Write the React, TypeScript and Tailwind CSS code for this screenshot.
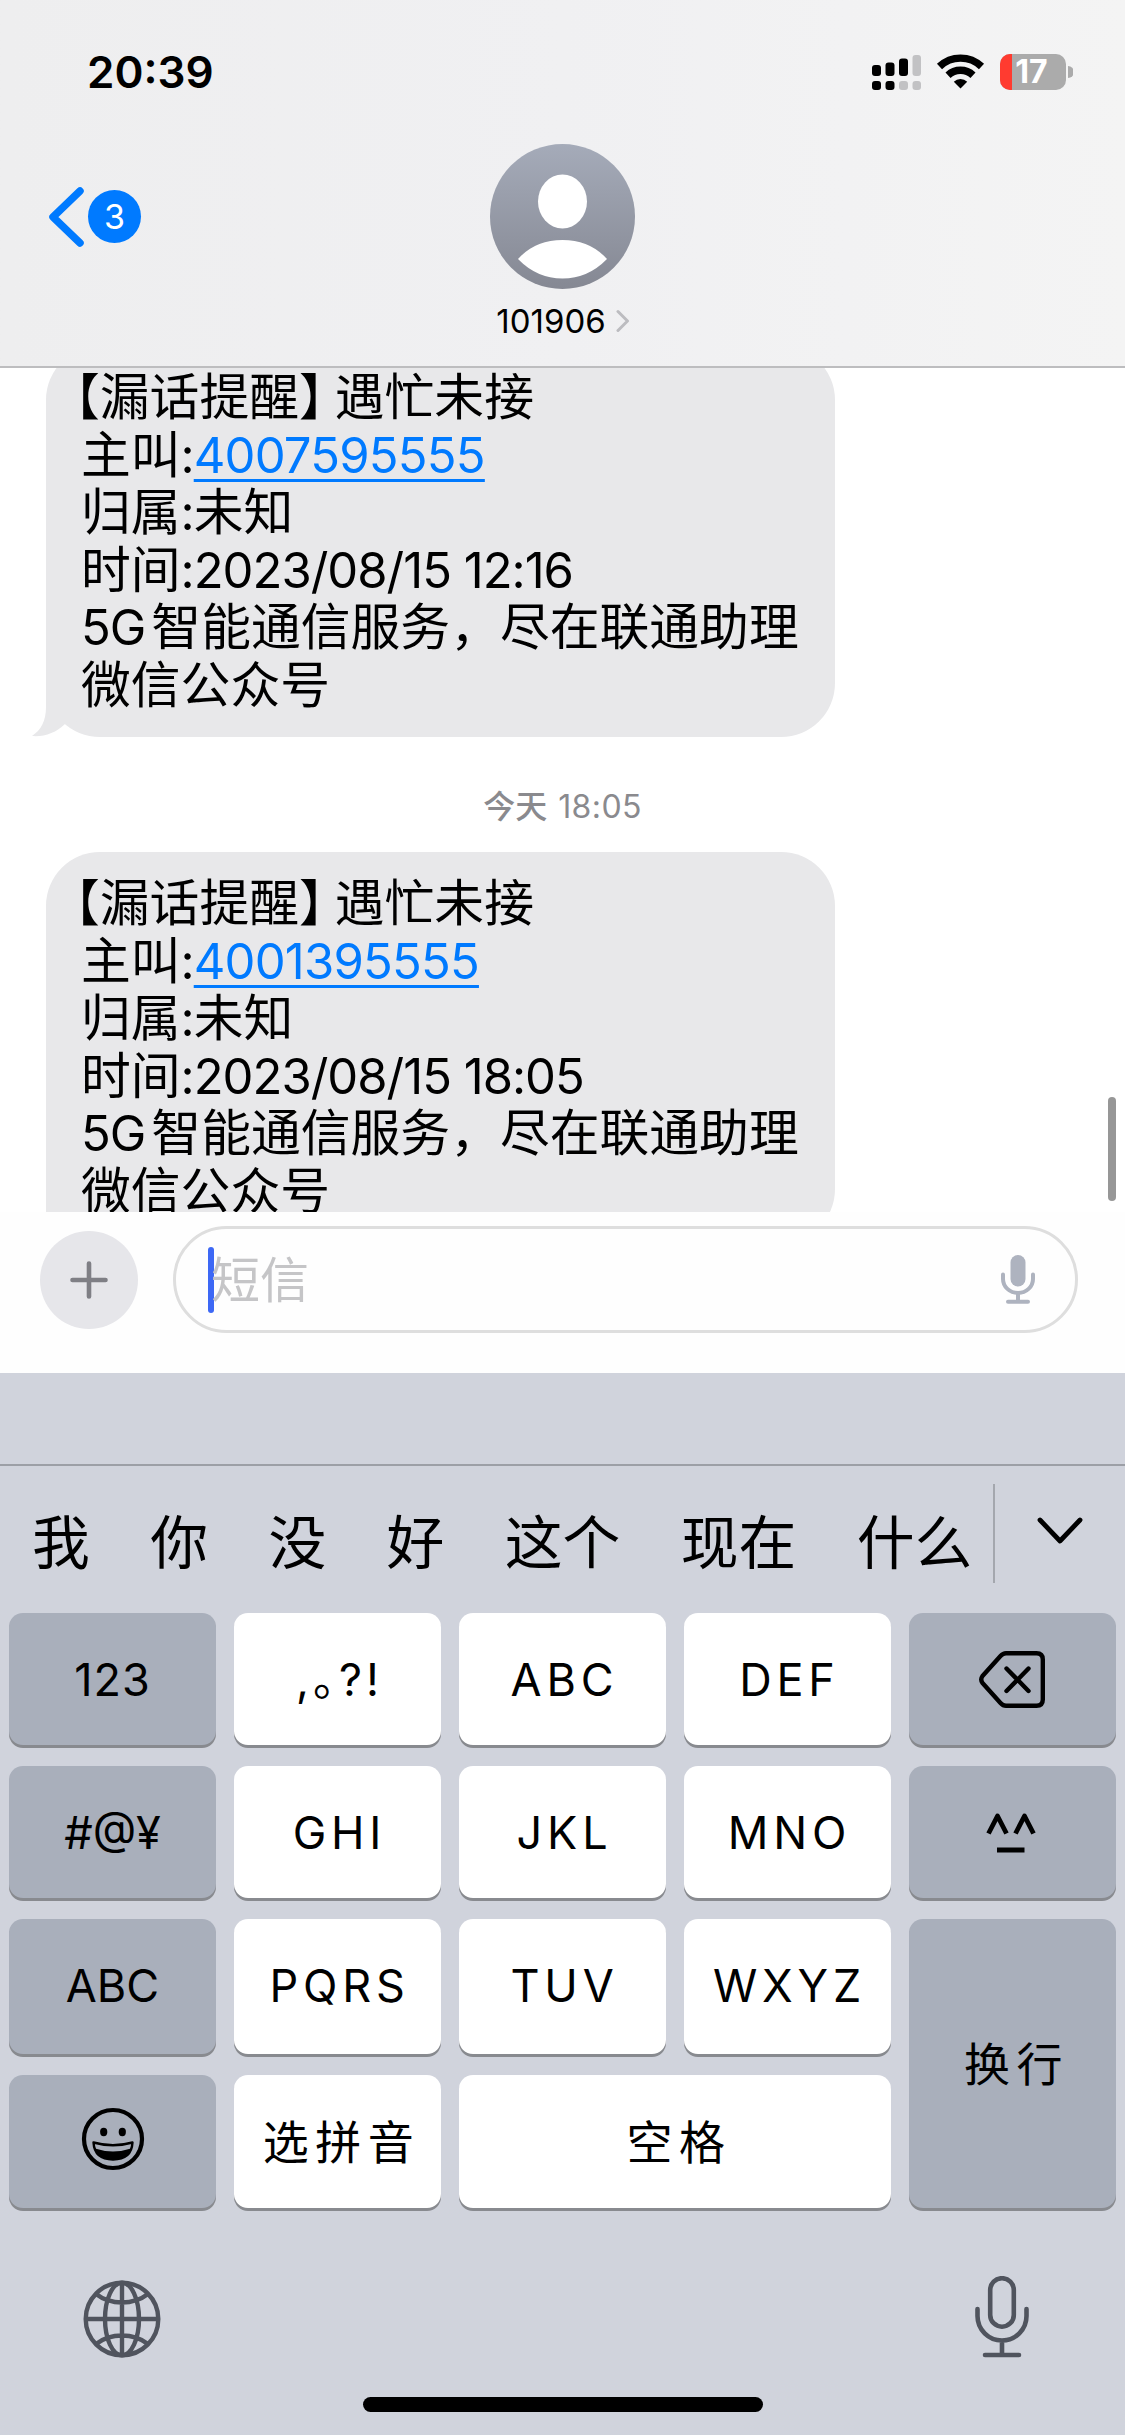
import type { ReactNode } from 'react';

interface Message {
  id: string;
  caller: string;
  time: string;
}

interface KeyProps {
  children: ReactNode;
  dark?: boolean;
  className?: string;
}

const messages: Message[] = [
  { id: '1', caller: '4007595555', time: '2023/08/15 12:16' },
  { id: '2', caller: '4001395555', time: '2023/08/15 18:05' },
];

const candidates = ['我', '你', '没', '好', '这个', '现在', '什么'];

function StatusBar() {
  return (
    <div className="flex h-[144px] items-center justify-between pl-[87px] pr-[52px]">
      <span className="text-[44px] font-semibold leading-[144px]">20:39</span>
      <svg width="201" height="38" viewBox="0 0 201 38">
        <g>
          <rect x="0" y="12" width="9" height="11" rx="3" />
          <rect x="13.5" y="9.5" width="9" height="13.5" rx="3" />
          <rect x="27" y="5.5" width="9" height="17.5" rx="3" />
          <rect x="40.5" y="2" width="8.5" height="21" rx="3" fill="#c2c2c4" />
          <rect x="0" y="28" width="9" height="9" rx="3" />
          <rect x="13.5" y="28" width="9" height="9" rx="3" />
          <rect x="27" y="28" width="9" height="9" rx="3" fill="#c2c2c4" />
          <rect x="40.5" y="28" width="8.5" height="9" rx="3" fill="#c2c2c4" />
        </g>
        <g fill="none" stroke="#000" strokeWidth="7.4">
          <path d="M67.5 13.5 A30.5 30.5 0 0 1 109.5 13.5" />
          <path d="M76 22.2 A18.3 18.3 0 0 1 101 22.2" />
        </g>
        <path d="M88.5 35.5 L81.8 28.8 A9.6 9.6 0 0 1 95.2 28.8 Z" />
        <defs>
          <clipPath id="battery">
            <rect x="128" y="1" width="66" height="36" rx="10" />
          </clipPath>
        </defs>
        <g clipPath="url(#battery)">
          <rect x="128" y="1" width="66" height="36" fill="#ababab" />
          <rect x="128" y="1" width="12" height="36" fill="#ff3b30" />
        </g>
        <path d="M196 13 a6 6 0 0 1 0 12 Z" fill="#ababab" />
        <text x="159.5" y="30" textAnchor="middle" fill="#fff" className="text-[32px] font-bold">
          17
        </text>
      </svg>
    </div>
  );
}

function Header() {
  return (
    <header className="h-[368px] border-b-2 border-[#bdbdbf] bg-linear-to-r from-[#eeeeef] via-[#f0f0f2] to-[#f4f4f4]">
      <StatusBar />
      <div className="grid grid-cols-[1fr_auto_1fr]">
        <div className="flex h-[145px] items-center gap-[3px] pl-[47px]">
          <svg width="38" height="62" viewBox="0 0 38 62" fill="none" stroke="#007aff" strokeWidth="7.5" strokeLinecap="round" strokeLinejoin="round">
            <path d="M33 5 L6 31 L33 57" />
          </svg>
          <span className="flex size-[53px] items-center justify-center rounded-full bg-[#007aff] text-[34px] leading-none text-white">3</span>
        </div>
        <div className="flex flex-col items-center">
          <svg width="145" height="145" viewBox="0 0 145 145">
            <defs>
              <linearGradient id="avatar" x1="0" y1="0" x2="0" y2="1">
                <stop offset="0" stopColor="#a5abb9" />
                <stop offset="1" stopColor="#858893" />
              </linearGradient>
            </defs>
            <circle cx="72.5" cy="72.5" r="72.5" fill="url(#avatar)" />
            <ellipse cx="72.5" cy="57.5" rx="24.5" ry="27" fill="#fff" />
            <path d="M28 115 Q45 96 72.5 96 Q100 96 117 115 Q98 134.5 72.5 134.5 Q47 134.5 28 115 Z" fill="#fff" />
          </svg>
          <div className="mt-[11px] flex items-center gap-[10px] pl-[1px] text-[33px] leading-[42px]">
            <span>101906</span>
            <svg width="14" height="24" viewBox="0 0 14 24" fill="none" stroke="#bcbcc0" strokeWidth="3" strokeLinecap="round" strokeLinejoin="round">
              <path d="M2 2.5 L11.5 12 L2 21.5" />
            </svg>
          </div>
        </div>
      </div>
    </header>
  );
}

function Latin({ children }: { children: ReactNode }) {
  return <span className="text-[49px] leading-none tracking-[-1px]">{children}</span>;
}

function Line({ children }: { children: ReactNode }) {
  return <div className="h-[57.6px]">{children}</div>;
}

function Bubble({ message }: { message: Message }) {
  return (
    <div className="relative ml-[46px] h-[391px] w-[789px] rounded-[54px] bg-[#e8e8ea] pl-[35px] pt-[23px] text-[49.8px] leading-[57.6px] whitespace-nowrap">
      <svg className="absolute -left-[14px] bottom-0" width="60" height="60" viewBox="0 0 60 60" fill="#e8e8ea">
        <path d="M14 0 V30 C14 44 9 53 0 59 C12 60 24 56 33 47 L60 40 V0 Z" />
      </svg>
      <div className="relative">
        <Line>
          <span className="-ml-[31px]">【</span>漏话提醒<span className="tracking-[-14px]">】</span>遇忙未接
        </Line>
        <Line>
          主叫<Latin>:</Latin>
          <span className="text-[49px] leading-none tracking-[-0.8px] text-[#007aff] underline decoration-[3px] underline-offset-[6px] [text-decoration-skip-ink:none]">
            {message.caller}
          </span>
        </Line>
        <Line>
          归属<Latin>:</Latin>未知
        </Line>
        <Line>
          时间<Latin>:{message.time}</Latin>
        </Line>
        <Line>
          <Latin>5G</Latin>
          <span className="ml-[6px]">智能通信服务，尽在联通助理</span>
        </Line>
        <Line>微信公众号</Line>
      </div>
    </div>
  );
}

function Conversation() {
  return (
    <main className="relative h-[844px] overflow-hidden bg-white">
      <div className="-mt-[22px]">
        <Bubble message={messages[0]} />
        <div className="flex h-[115px] items-center justify-center pt-[25px] text-[32px] text-[#8a8a8e]">
          <span className="font-medium">今天</span>
          <span className="ml-[11px] tracking-[0.4px]">18:05</span>
        </div>
        <Bubble message={messages[1]} />
      </div>
      <div className="absolute right-[9px] top-[729px] h-[104px] w-[8px] rounded-full bg-[#979797]" />
    </main>
  );
}

function Composer() {
  return (
    <div className="flex h-[161px] gap-[35px] bg-[#fefefe] pl-[40px] pr-[47px] pt-[14px]">
      <button className="mt-[5px] flex size-[98px] shrink-0 items-center justify-center rounded-full bg-[#e6e6ea]">
        <svg width="38" height="38" viewBox="0 0 38 38" stroke="#7f7f85" strokeWidth="4.6" strokeLinecap="round">
          <path d="M19 2.5 V35.5 M2.5 19 H35.5" />
        </svg>
      </button>
      <div className="flex h-[107px] flex-1 items-center rounded-full border-[3px] border-[#dedede] pl-[32px] pr-[40px]">
        <span className="h-[66px] w-[6px] rounded-full bg-[#3d68f5]" />
        <span className="-ml-[3px] flex-1 pt-[2px] text-[49px] leading-none text-[#c5c5c7]">短信</span>
        <svg width="34" height="49" viewBox="0 0 34 49" fill="none" stroke="#aeb3bf" strokeWidth="4" strokeLinecap="round">
          <rect x="9.5" y="0" width="15" height="31.5" rx="7.5" fill="#aeb3bf" stroke="none" />
          <path d="M2 19.5 V24 A15 14 0 0 0 32 24 V19.5 M17 38 V46.5 M7 46.8 H27" />
        </svg>
      </div>
    </div>
  );
}

function Key({ children, dark, className = '' }: KeyProps) {
  return (
    <button
      className={`flex items-center justify-center rounded-[14px] text-[45px] leading-none shadow-[0_3px_0_#888a8f] ${dark ? 'bg-[#a9afbb]' : 'bg-white'} ${className}`}
    >
      {children}
    </button>
  );
}

function Letters({ children }: { children: ReactNode }) {
  return <span className="-mr-[4px] tracking-[4.8px]">{children}</span>;
}

function Hanzi({ children }: { children: ReactNode }) {
  return <span className="-mr-[8px] text-[46px] tracking-[6.5px]">{children}</span>;
}

function Keyboard() {
  return (
    <div className="h-[1062px] bg-[#d0d3dc]">
      <div className="h-[93px] border-b-2 border-[#9c9fa6]" />
      <div className="flex h-[147px]">
        <div className="flex flex-1 gap-[60.4px] whitespace-nowrap pl-[32px] pt-[45px] text-[57.8px] leading-[64px]">
          {candidates.map((word) => (
            <span key={word}>{word}</span>
          ))}
        </div>
        <div className="mt-[18px] h-[99px] w-[2px] bg-[#a4a7ae]" />
        <div className="flex w-[130px] justify-center pt-[50px]">
          <svg width="48" height="30" viewBox="0 0 48 30" fill="none" stroke="#000" strokeWidth="4.8" strokeLinecap="round" strokeLinejoin="round">
            <path d="M4 4 L24 25 L44 4" />
          </svg>
        </div>
      </div>
      <div className="grid grid-cols-5 grid-rows-[132px_132px_135px_133px] gap-x-[18px] gap-y-[21px] px-[9px]">
        <Key dark>
          <span className="tracking-[1px]">123</span>
        </Key>
        <Key>
          <span className="-mr-[4px] tracking-[4px]">
            ,<span className="tracking-[-19px]">。</span>?!
          </span>
        </Key>
        <Key><Letters>ABC</Letters></Key>
        <Key><Letters>DEF</Letters></Key>
        <Key dark>
          <svg className="mr-[1px]" width="66" height="57" viewBox="0 0 66 57" fill="none" stroke="#000" strokeWidth="4.4" strokeLinecap="round" strokeLinejoin="round">
            <path d="M27 2.2 H57.5 Q63.8 2.2 63.8 8.5 V48.5 Q63.8 54.8 57.5 54.8 H27 Q24 54.8 21.5 52 L3.5 32 Q1 28.5 3.5 25 L21.5 5 Q24 2.2 27 2.2 Z" />
            <path d="M27.5 17.5 L49.5 40 M49.5 17.5 L27.5 40" />
          </svg>
        </Key>

        <Key dark>#@¥</Key>
        <Key><Letters>GHI</Letters></Key>
        <Key><Letters>JKL</Letters></Key>
        <Key><Letters>MNO</Letters></Key>
        <Key dark>
          <svg className="mr-[3px] mt-[1px]" width="50" height="40" viewBox="0 0 50 40" fill="none" stroke="#000" strokeWidth="4.8" strokeLinejoin="round">
            <path d="M2.5 20.5 L11.5 3 L20.5 20.5 M29.5 20.5 L38.5 3 L47.5 20.5 M11 37 H38.5" />
          </svg>
        </Key>

        <Key dark className="pb-[2px]">ABC</Key>
        <Key className="pb-[2px]"><Letters>PQRS</Letters></Key>
        <Key className="pb-[2px]"><Letters>TUV</Letters></Key>
        <Key className="pb-[2px]"><Letters>WXYZ</Letters></Key>
        <Key dark className="row-span-2">
          <Hanzi>换行</Hanzi>
        </Key>

        <Key dark>
          <svg className="mb-[5px]" width="64" height="64" viewBox="0 0 64 64">
            <circle cx="32" cy="32" r="29" fill="none" stroke="#000" strokeWidth="4.2" />
            <ellipse cx="22.7" cy="25" rx="3.6" ry="4.2" />
            <ellipse cx="41.3" cy="25" rx="3.6" ry="4.2" />
            <path d="M12.5 35.5 Q32 41 51.5 35.5 Q50.5 52.5 32 52.5 Q13.5 52.5 12.5 35.5 Z" fill="none" stroke="#000" strokeWidth="2.4" strokeLinejoin="round" />
            <path d="M14 41.5 Q32 47.5 50 41.5 Q46 52.5 32 52.5 Q18 52.5 14 41.5 Z" />
          </svg>
        </Key>
        <Key>
          <Hanzi>选拼音</Hanzi>
        </Key>
        <Key className="col-span-2">
          <Hanzi>空格</Hanzi>
        </Key>
      </div>
      <div className="flex items-start justify-between pl-[83px] pr-[96px] pt-[68px]">
        <svg className="mt-[4px]" width="78" height="78" viewBox="0 0 78 78" fill="none" stroke="#50545e" strokeWidth="4.4">
          <circle cx="39" cy="39" r="36.3" />
          <ellipse cx="39" cy="39" rx="17" ry="36.3" />
          <path d="M39 2 V76 M2 39 H76 M13 14 Q24 22.5 39 22.5 Q54 22.5 65 14 M13 64 Q24 55.5 39 55.5 Q54 55.5 65 64" />
        </svg>
        <svg width="54" height="82" viewBox="0 0 54 82" fill="none" stroke="#50545e" strokeWidth="4.6" strokeLinecap="round">
          <rect x="15.2" y="2.2" width="23.6" height="48.5" rx="11.8" />
          <path d="M2.5 33 V40 A24.5 24.5 0 0 0 51.5 40 V33 M27 65 V79 M10 79 H44" />
        </svg>
      </div>
      <div className="mx-auto mt-[39px] h-[15px] w-[400px] rounded-full bg-black" />
    </div>
  );
}

export default function App() {
  return (
    <div className="h-[2435px] w-[1125px] overflow-hidden font-['Inter','Noto_Sans_CJK_SC',sans-serif] text-black">
      <Header />
      <Conversation />
      <Composer />
      <Keyboard />
    </div>
  );
}
